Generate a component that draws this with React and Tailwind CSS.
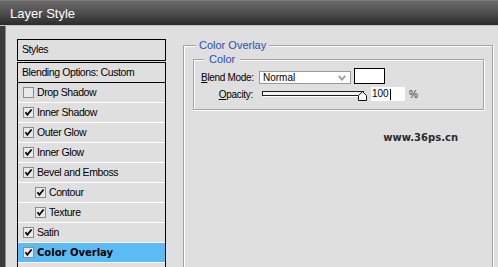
import React from "react";

const rows = [
  { label: "Drop Shadow", checked: false },
  { label: "Inner Shadow", checked: true },
  { label: "Outer Glow", checked: true },
  { label: "Inner Glow", checked: true },
  { label: "Bevel and Emboss", checked: true },
  { label: "Contour", checked: true, indent: true },
  { label: "Texture", checked: true, indent: true },
  { label: "Satin", checked: true },
  { label: "Color Overlay", checked: true, active: true },
  { label: "", checked: false },
];

function Check({ checked }) {
  return (
    <div className="w-[11px] h-[11px] border border-[#8c8c8c] bg-[#e9e9e9] flex items-center justify-center shrink-0">
      {checked && (
        <svg width="9" height="9" viewBox="0 0 9 9">
          <path d="M1.5 4.2 L3.4 6.8 L7.6 1.4" fill="none" stroke="#000" strokeWidth="1.7" />
        </svg>
      )}
    </div>
  );
}

export default function App() {
  return (
    <div className="w-[498px] h-[267px] overflow-hidden bg-[#dfdfdf] font-['Liberation_Sans',Arial,sans-serif] text-black">
      {/* Title bar */}
      <div className="h-[25px] bg-gradient-to-b from-[#6a6a6a] via-[#4e4e4e] to-[#2c2c2c] border-t border-[#7c7c7c] flex items-center pl-[10px]">
        <span className="text-white text-[13px] leading-none">Layer Style</span>
      </div>
      <div className="h-px bg-[#c4c4c4]" />
      {/* Body */}
      <div className="flex h-[241px]">
        <div className="w-[6px] bg-[#3b3b3b] border-r border-[#8a8a8a] shrink-0" />
        <div className="flex items-start pl-[11px] pt-[13px]">
          {/* Left list */}
          <div className="w-[149px] shrink-0 text-[10.5px] tracking-[-0.4px]">
            <div className="h-[22px] border border-black flex items-center pl-[4px]">Styles</div>
            <div className="mt-[1px] border-x border-t border-black">
              <div className="h-[20px] border-b border-black flex items-center pl-[4px]">
                Blending Options: Custom
              </div>
              {rows.map((r, i) => (
                <div
                  key={i}
                  className={`h-[20px] border-b border-white flex items-center gap-[3px] ${
                    r.indent ? "pl-[17px]" : "pl-[5px]"
                  } ${r.active ? "bg-[#5bbcf5]" : ""}`}
                >
                  <Check checked={r.checked} />
                  {r.active ? (
                    <span className="font-['DejaVu_Sans',sans-serif] font-bold tracking-normal text-[10px]">{r.label}</span>
                  ) : (
                    r.label && <span>{r.label}</span>
                  )}
                </div>
              ))}
            </div>
          </div>

          {/* Right panel */}
          <fieldset className="ml-[17px] w-[310px] h-[260px] border border-[#a3a3a3] shadow-[inset_1px_1px_0_#fff,1px_1px_0_#fff] pl-[9px] pr-[8px]">
            <legend className="ml-[3px] px-[3px] bg-[#dfdfdf] text-[11px] leading-[13px] text-[#2a50b0]">
              Color Overlay
            </legend>
            <fieldset className="mt-[1px] border border-[#a3a3a3] shadow-[inset_1px_1px_0_#fff,1px_1px_0_#fff] pl-[7px] pt-[2px] pb-[8px]">
              <legend className="ml-[3px] px-[5px] bg-[#dfdfdf] text-[11px] leading-[13px] text-[#2a50b0]">
                Color
              </legend>
              <div className="flex items-end h-[16px] text-[10px]">
                <div className="w-[52px] text-right tracking-[-0.3px] leading-[13px] whitespace-nowrap">
                  <span className="underline">B</span>lend Mode:
                </div>
                <div className="ml-[6px] w-[92px] h-[13px] bg-white border border-[#9a9a9a] flex items-center justify-between pl-[3px] pr-[4px]">
                  <span className="leading-none">Normal</span>
                  <svg width="8" height="6" viewBox="0 0 8 6">
                    <path d="M0.8 0.8 L4 4.6 L7.2 0.8" fill="none" stroke="#9c9c9c" strokeWidth="1.8" />
                  </svg>
                </div>
                <div className="ml-[3px] w-[31px] h-[16px] bg-white border border-black" />
              </div>
              <div className="flex items-center h-[14px] mt-[3px] text-[10px]">
                <div className="w-[52px] text-right tracking-[-0.3px] whitespace-nowrap">
                  <span className="underline">O</span>pacity:
                </div>
                <div className="ml-[9px] relative w-[106px] h-[14px]">
                  <div className="mt-[4px] w-[102px] h-[5px] border border-[#1e1e1e] bg-[#f2f2f2] shadow-[1px_1px_0_#fff]" />
                  <svg className="absolute left-[96px] top-[4px]" width="10" height="10" viewBox="0 0 10 10">
                    <path d="M0.5 9.5 L0.5 4.5 L4.5 0.7 L8.5 4.5 L8.5 9.5 Z" fill="#fff" stroke="#111" strokeWidth="1" />
                  </svg>
                </div>
                <div className="ml-[3px] w-[34px] h-[14px] bg-white flex items-center pl-[1px]">
                  <span className="leading-none">100</span>
                  <span className="w-px h-[11px] bg-black ml-[1px]" />
                </div>
                <span className="ml-[4px] text-[#333]">%</span>
              </div>
            </fieldset>
            <div className="mt-[22px] text-right pr-[26px] font-['DejaVu_Sans',sans-serif] font-bold text-[10px] leading-[12px] text-[#2b2b2b]">
              www.36ps.cn
            </div>
          </fieldset>
        </div>
      </div>
    </div>
  );
}
